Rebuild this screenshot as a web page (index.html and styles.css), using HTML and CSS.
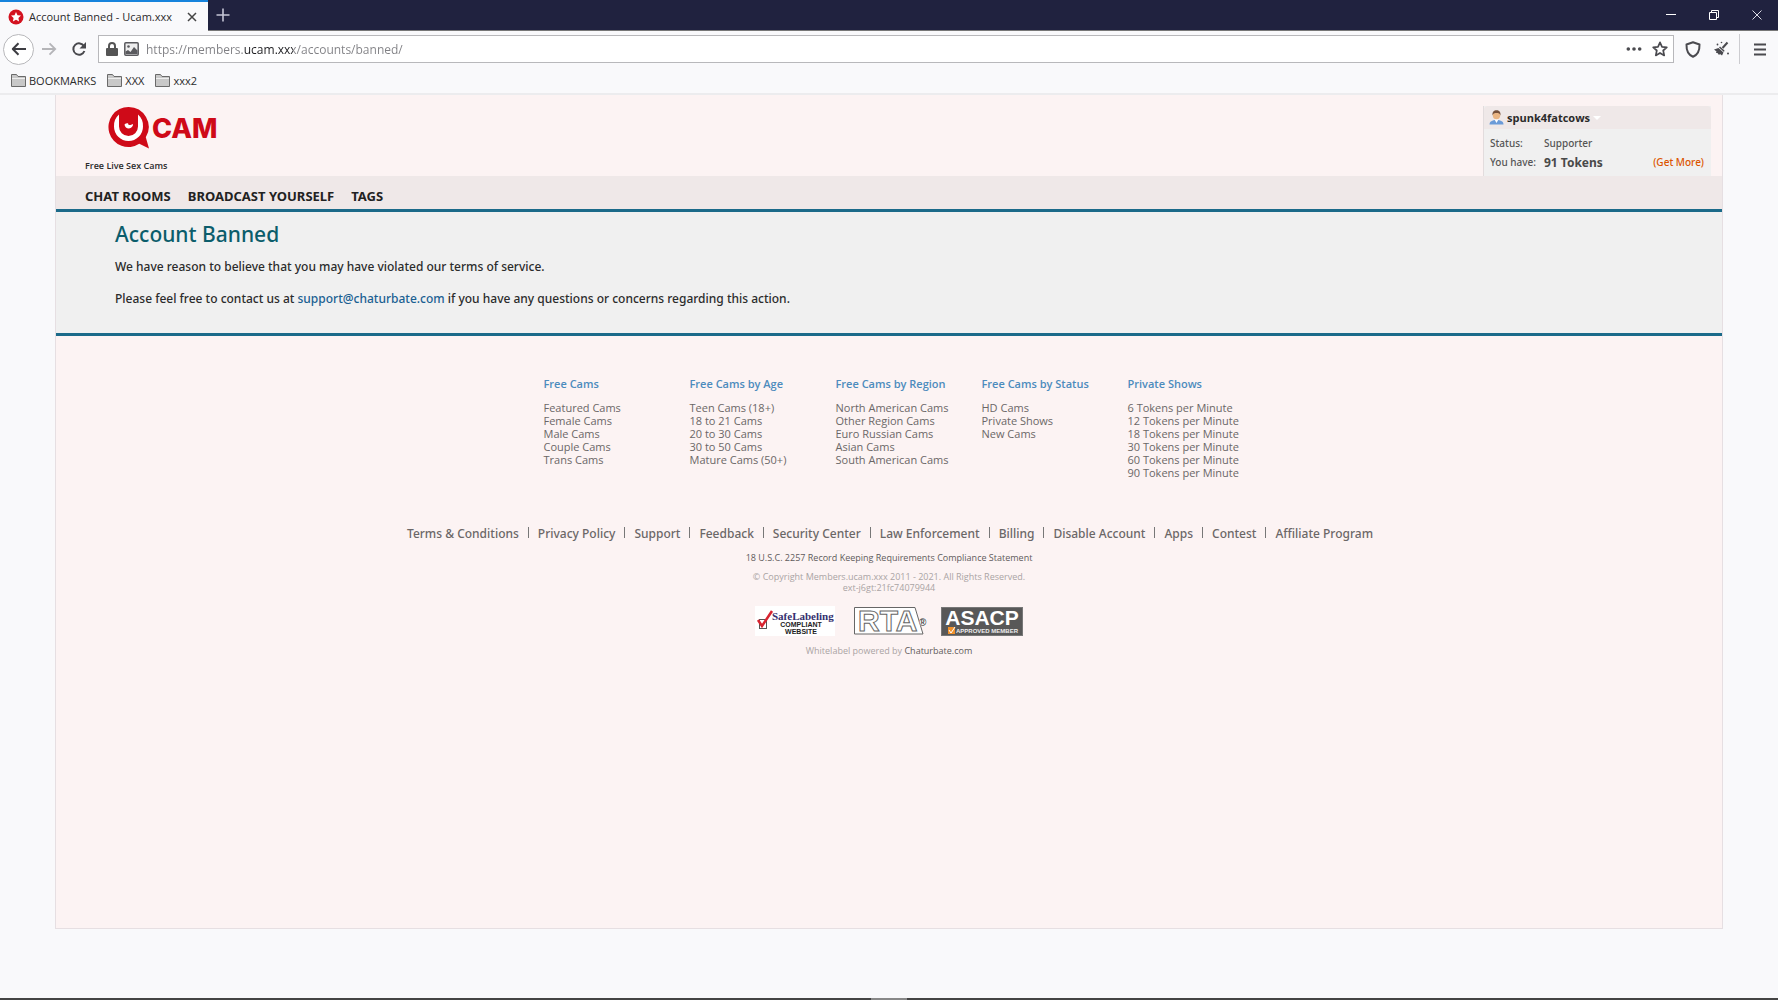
FILE: index.html
```html
<!DOCTYPE html>
<html lang="en">
<head>
<meta charset="utf-8">
<title>Account Banned - Ucam.xxx</title>
<link rel="stylesheet" href="styles.css">
</head>
<body>
<div class="window">
  <div class="titlebar">
    <div class="tab">
      <svg class="favicon" width="16" height="16" viewBox="0 0 16 16"><circle cx="8" cy="8" r="7.500" fill="#d3121f"/><path d="M8 3l1.500 3.200 3.500.4-2.600 2.400.7 3.500L8 10.800l-3.100 1.700.7-3.500L3 6.600l3.500-.4z" fill="#fff"/></svg>
      <span class="tab-title">Account Banned - Ucam.xxx</span>
      <button class="icon-btn" aria-label="Close tab"><svg width="10" height="10" viewBox="0 0 10 10"><path d="M1 1l8 8M9 1l-8 8" stroke="#444" stroke-width="1.500"/></svg></button>
    </div>
    <button class="icon-btn new-tab" aria-label="New tab"><svg width="14" height="14" viewBox="0 0 14 14"><path d="M7 0.500v13M0.500 7h13" stroke="#c5c6d6" stroke-width="1.600"/></svg></button>
    <div class="window-controls">
      <button class="icon-btn" aria-label="Minimize"><svg width="10" height="10" viewBox="0 0 10 10"><path d="M0 4.500h10" stroke="#fff"/></svg></button>
      <button class="icon-btn" aria-label="Restore"><svg width="10" height="10" viewBox="0 0 10 10" fill="none" stroke="#fff"><path d="M.5 2.500h7v7h-7zM2.500 2.500v-2h7v7h-2"/></svg></button>
      <button class="icon-btn" aria-label="Close"><svg width="10" height="10" viewBox="0 0 10 10"><path d="M.5.5l9 9M9.500.5l-9 9" stroke="#dcdce6"/></svg></button>
    </div>
  </div>
  <div class="toolbar">
    <button class="icon-btn back" aria-label="Back"><svg width="16" height="14" viewBox="0 0 16 14" fill="none" stroke="#3d3d42" stroke-width="2"><path d="M15 7H2M7.500 1.300L1.800 7l5.700 5.700" stroke-linejoin="round"/></svg></button>
    <button class="icon-btn forward" aria-label="Forward"><svg width="16" height="14" viewBox="0 0 16 14" fill="none" stroke="#b5b5b8" stroke-width="1.800"><path d="M1 7h13M8.500 1.300L14.200 7l-5.700 5.700"/></svg></button>
    <button class="icon-btn reload" aria-label="Reload"><svg width="16" height="16" viewBox="0 0 16 16"><path d="M13 5.200A5.700 5.700 0 1 0 13.400 10" fill="none" stroke="#48484c" stroke-width="2"/><path d="M15 1v6.500H8.500z" fill="#48484c"/></svg></button>
    <div class="address">
      <svg width="12" height="14" viewBox="0 0 12 14"><path d="M3 7V4a3 3 0 0 1 6 0v3" fill="none" stroke="#555" stroke-width="2"/><rect y="6" width="12" height="8" rx="1" fill="#555"/></svg>
      <svg width="15" height="14" viewBox="0 0 15 14"><rect x=".8" y=".8" width="13.400" height="12.400" rx="1" fill="#eee" stroke="#5a5a5e" stroke-width="1.500"/><circle cx="4.500" cy="4.500" r="1.300" fill="#5a5a5e"/><path d="M1.500 12V9.500L4 8l2.500 2L10 5l3.500 3.500V12z" fill="#5a5a5e"/></svg>
      <input class="url" type="text" aria-label="Address" value="https://members.ucam.xxx/accounts/banned/">
      <button class="icon-btn" aria-label="Page actions"><svg width="16" height="4" viewBox="0 0 16 4" fill="#4a4a4f"><circle cx="2.300" cy="2" r="1.800"/><circle cx="8" cy="2" r="1.800"/><circle cx="13.700" cy="2" r="1.800"/></svg></button>
      <button class="icon-btn" aria-label="Bookmark this page"><svg width="16" height="16" viewBox="0 0 16 16"><path d="M8 1.300l2 4.500 4.800.5-3.600 3.200 1 4.900L8 11.900l-4.200 2.500 1-4.900L1.200 6.300l4.800-.5z" fill="none" stroke="#4a4a4f" stroke-width="1.700" stroke-linejoin="round"/></svg></button>
    </div>
    <button class="icon-btn shield" aria-label="Protection"><svg width="16" height="17" viewBox="0 0 16 17"><path d="M8 1.200l6.500 2.300c.2 6-1.700 10.300-6.500 12.200C3.200 13.800 1.300 9.500 1.500 3.500z" fill="none" stroke="#4a4a4f" stroke-width="2" stroke-linejoin="round"/></svg></button>
    <button class="icon-btn broom" aria-label="Clean up"><svg width="16" height="16" viewBox="0 0 16 16" fill="#4a4a4f"><path d="M13.500 1.500L8.500 7" stroke="#4a4a4f" stroke-width="2"/><path d="M6 5.500l4.500 4-.5 1.500L5 6.500zM4.500 7l5 4.500L8 14.500 6 13l-1 1-1.500-2L2 12l.5-1.500L0 8.500z"/><circle cx="7.500" cy="1.500" r=".8"/><circle cx="3.500" cy="3.500" r=".9"/><circle cx="14" cy="12.500" r="1"/></svg></button>
    <button class="icon-btn menu" aria-label="Menu"><svg width="12" height="13" viewBox="0 0 12 13"><path d="M0 1.500h12M0 6.500h12M0 11.500h12" stroke="#4a4a4f" stroke-width="1.800"/></svg></button>
  </div>
  <div class="bookmarks">
    <button><svg width="15" height="13" viewBox="0 0 15 13"><path d="M.5 12.500V.5h5l1.500 2h7.500v10z" fill="#c8c8c8" stroke="#6a6a6a"/><path d="M1 4.500h13" stroke="#eee"/></svg>BOOKMARKS</button>
    <button><svg width="15" height="13" viewBox="0 0 15 13"><path d="M.5 12.500V.5h5l1.500 2h7.500v10z" fill="#c8c8c8" stroke="#6a6a6a"/><path d="M1 4.500h13" stroke="#eee"/></svg>XXX</button>
    <button><svg width="15" height="13" viewBox="0 0 15 13"><path d="M.5 12.500V.5h5l1.500 2h7.500v10z" fill="#c8c8c8" stroke="#6a6a6a"/><path d="M1 4.500h13" stroke="#eee"/></svg>xxx2</button>
  </div>
  <div class="page">
    <header class="site-header">
      <div class="brand">
        <a class="logo" href="#" aria-label="UCAM"><svg width="110" height="44" viewBox="0 0 110 44">
          <path d="M20.500 1a20 20 0 1 0 10.800 36.800L41 42.500l-3.200-11.200A20 20 0 0 0 20.500 1z" fill="#cf0a18"/>
          <path d="M11 8.500v12a9.500 9.500 0 0 0 19 0v-12a15 15 0 0 1 5 12 14.500 14.500 0 0 1-29 0 15 15 0 0 1 5-12z" fill="#fff"/>
          <path d="M14 6v13a6.500 6.500 0 0 0 13 0V6z" fill="#cf0a18"/>
          <path d="M16.500 18.500a4.200 4.200 0 0 0 8.500-.5l-2.500 1a2 2 0 0 1-2.500-1.800 4 4 0 0 0-3.500 1.300z" fill="#fff"/>
          <text x="44" y="32" class="logo-text">CAM</text></svg></a>
        <p class="tagline">Free Live Sex Cams</p>
      </div>
      <section class="user">
        <h2 class="user-name"><svg width="15" height="15" viewBox="0 0 15 15"><path d="M.5 14.500c0-3 2.500-4.500 7-4.500s7 1.500 7 4.500z" fill="#6b9bd8"/><path d="M5.500 9.500h4L7.500 13z" fill="#fff"/><circle cx="7.500" cy="5.500" r="3.700" fill="#eab583"/><path d="M3.500 5.500C3 2 5 .3 7.500.3S12 2 11.500 5.500C11 3.500 9.500 3 7.500 3s-3.500.5-4 2.500z" fill="#75503a"/></svg>spunk4fatcows<span class="caret"></span></h2>
        <dl class="user-info">
          <dt>Status:</dt><dd>Supporter</dd><dd></dd>
          <dt>You have:</dt><dd class="tokens">91 Tokens</dd><dd><a href="#">(Get More)</a></dd>
        </dl>
      </section>
    </header>
    <nav class="site-nav">
      <a href="#">CHAT ROOMS</a><a href="#">BROADCAST YOURSELF</a><a href="#">TAGS</a>
    </nav>
    <main class="notice">
      <h1>Account Banned</h1>
      <p>We have reason to believe that you may have violated our terms of service.</p>
      <p>Please feel free to contact us at <a href="#">support@chaturbate.com</a> if you have any questions or concerns regarding this action.</p>
    </main>
    <footer class="site-footer">
      <div class="columns">
        <div><h3>Free Cams</h3><ul><li><a href="#">Featured Cams</a></li><li><a href="#">Female Cams</a></li><li><a href="#">Male Cams</a></li><li><a href="#">Couple Cams</a></li><li><a href="#">Trans Cams</a></li></ul></div>
        <div><h3>Free Cams by Age</h3><ul><li><a href="#">Teen Cams (18+)</a></li><li><a href="#">18 to 21 Cams</a></li><li><a href="#">20 to 30 Cams</a></li><li><a href="#">30 to 50 Cams</a></li><li><a href="#">Mature Cams (50+)</a></li></ul></div>
        <div><h3>Free Cams by Region</h3><ul><li><a href="#">North American Cams</a></li><li><a href="#">Other Region Cams</a></li><li><a href="#">Euro Russian Cams</a></li><li><a href="#">Asian Cams</a></li><li><a href="#">South American Cams</a></li></ul></div>
        <div><h3>Free Cams by Status</h3><ul><li><a href="#">HD Cams</a></li><li><a href="#">Private Shows</a></li><li><a href="#">New Cams</a></li></ul></div>
        <div><h3>Private Shows</h3><ul><li><a href="#">6 Tokens per Minute</a></li><li><a href="#">12 Tokens per Minute</a></li><li><a href="#">18 Tokens per Minute</a></li><li><a href="#">30 Tokens per Minute</a></li><li><a href="#">60 Tokens per Minute</a></li><li><a href="#">90 Tokens per Minute</a></li></ul></div>
      </div>
      <ul class="links">
        <li><a href="#">Terms &amp; Conditions</a></li><li><a href="#">Privacy Policy</a></li><li><a href="#">Support</a></li><li><a href="#">Feedback</a></li><li><a href="#">Security Center</a></li><li><a href="#">Law Enforcement</a></li><li><a href="#">Billing</a></li><li><a href="#">Disable Account</a></li><li><a href="#">Apps</a></li><li><a href="#">Contest</a></li><li><a href="#">Affiliate Program</a></li>
      </ul>
      <p class="compliance"><a href="#">18 U.S.C. 2257 Record Keeping Requirements Compliance Statement</a></p>
      <p class="copyright">© Copyright Members.ucam.xxx 2011 - 2021. All Rights Reserved.<br>ext-j6gt:21fc74079944</p>
      <div class="badges">
        <a href="#"><svg width="80" height="30" viewBox="0 0 80 30"><rect width="80" height="30" fill="#fff"/><rect x="4.500" y="13.500" width="7" height="9" fill="none" stroke="#555"/><path d="M3 14l4 6L17 5" fill="none" stroke="#d8232f" stroke-width="2.500"/><text x="17" y="14" class="safe">SafeLabeling</text><text x="46" y="21" class="safe-sub">COMPLIANT</text><text x="46" y="28" class="safe-sub">WEBSITE</text></svg></a>
        <a href="#"><svg width="80" height="30" viewBox="-5 0 80 30"><path d="M1.500 1.500H62L70 28H1.500z" fill="#fff" stroke="#666"/><text x="5" y="25" class="rta">RTA</text><circle cx="70" cy="16" r="4" fill="#fff"/><text x="66" y="20" class="reg">®</text></svg></a>
        <a href="#"><svg width="82" height="29" viewBox="0 0 82 29"><rect x=".5" y=".5" width="81" height="28" fill="#585858" stroke="#777"/><text x="41" y="18" class="asacp">ASACP</text><rect x="7" y="20" width="7" height="7" fill="#f0912b"/><path d="M8 23l2 3 4-6" fill="none" stroke="#fff"/><text x="46" y="26" class="asacp-sub">APPROVED MEMBER</text></svg></a>
      </div>
      <p class="powered">Whitelabel powered by <a href="#">Chaturbate.com</a></p>
    </footer>
  </div>
  <div class="taskbar-edge"></div>
</div>
</body>
</html>
```
FILE: styles.css
```css
* { box-sizing: border-box; }
body {
  margin: 0;
  background: #f9f9fb;
  color: #2b2b2b;
  font-family: "Open Sans", "Noto Sans", sans-serif;
  font-size: 12px;
}
h1, h2, h3, p, ul, dl, dd { margin: 0; padding: 0; }
ul { list-style: none; }
a { color: inherit; text-decoration: none; }
svg { display: block; flex: none; }
button {
  margin: 0;
  padding: 0;
  border: 0;
  background: none;
  font: inherit;
  color: inherit;
}
.icon-btn { display: flex; align-items: center; justify-content: center; }
.window { display: flex; flex-direction: column; min-height: 100vh; }

/* Browser frame */
.titlebar { display: flex; height: 31px; background: #20223f; border-bottom: 1px solid #777; }
.tab {
  display: flex;
  align-items: center;
  width: 208px;
  height: 31px;
  padding: 0 11px 0 8px;
  border-top: 2px solid #1683dc;
  background: #f9f9fb;
  font-size: 11px;
}
.tab-title { flex: 1; padding-left: 5px; white-space: nowrap; }
.new-tab { width: 30px; }
.window-controls { display: flex; gap: 33px; margin-left: auto; padding-right: 16px; }
.toolbar { display: flex; align-items: center; height: 36px; padding: 0 12px 0 3px; }
.back { width: 31px; height: 31px; border: 1px solid #b8b8bb; border-radius: 50%; background: #fff; }
.forward { width: 30px; }
.reload { width: 30px; }
.address {
  display: flex;
  flex: 1;
  align-items: center;
  gap: 6px;
  height: 28px;
  margin-left: 4px;
  padding: 0 5px 0 7px;
  border: 1px solid #b8b8bb;
  background: #fff;
}
.address .icon-btn { margin-left: 4px; }
.url {
  flex: 1;
  margin-left: 1px;
  padding: 2px 0 0;
  border: 0;
  outline: 0;
  color: transparent;
  background: linear-gradient(90deg, #808084 97px, #1c1c1f 97px 147px, #808084 147px);
  -webkit-background-clip: text;
  background-clip: text;
  font: 12px/20px "Open Sans", sans-serif;
}
.shield { width: 16px; margin-left: 11px; }
.broom { width: 16px; margin-left: 13px; }
.menu { width: 27px; height: 30px; margin-left: 9px; padding-left: 14px; border-left: 1px solid #ccccd0; }
.bookmarks {
  display: flex;
  gap: 11px;
  height: 28px;
  padding: 0 11px;
  border-bottom: 2px solid #ececee;
  font-size: 11px;
}
.bookmarks button { display: flex; align-items: center; gap: 3px; }

/* Site */
.page {
  display: flex;
  flex-direction: column;
  flex: 1;
  margin: 0 55px 69px;
  border: 1px solid #e6dfe2;
  border-top: 0;
  background: #fcf3f3;
}
.site-header { display: flex; justify-content: space-between; padding: 11px 11px 0 29px; height: 81px; }
.logo { display: block; width: 110px; margin-left: 23px; }
.logo-text { font: 800 27px Inter, sans-serif; fill: #cf0a18; }
.tagline { margin-top: 9px; font-size: 9px; line-height: 14px; font-weight: 600; }
.user { width: 228px; border-left: 1px solid #e2dcdd; background: #f0f0f0; color: #555; }
.user-name {
  display: flex;
  align-items: center;
  gap: 3px;
  height: 23px;
  padding-left: 5px;
  border-radius: 4px 4px 0 0;
  background: #efe8e8;
  color: #2b2b2b;
  font-size: 11px;
}
.caret { border: 4px solid transparent; border-top-color: #fff; border-bottom: 0; }
.user-info {
  display: grid;
  grid-template-columns: 54px 1fr auto;
  padding: 5px 7px 0 6px;
  font: 500 10px/19px "Noto Sans", sans-serif;
}
.user-info a { color: #dc5500; }
.tokens { font-size: 12px; font-weight: 700; color: #494949; }
.site-nav {
  display: flex;
  align-items: center;
  gap: 17px;
  height: 36px;
  padding: 6px 29px 0;
  border-bottom: 3px solid #1b6a89;
  background: #efe8e8;
  font: 700 13px "Noto Sans", sans-serif;
  color: #222;
}
.notice {
  height: 124px;
  padding: 8px 59px 0;
  border-bottom: 3px solid #1b6a89;
  background: #f0f0f0;
  font: 500 12px/16px "Noto Sans", sans-serif;
}
.notice h1 { font-size: 21px; font-weight: 500; line-height: 28px; color: #0b5d6b; }
.notice p { margin-top: 11px; }
.notice p + p { margin-top: 16px; }
.notice a { color: #1a6092; }
.site-footer { display: flex; flex-direction: column; align-items: center; padding-top: 40px; color: #6b6767; }
.columns { display: grid; grid-template-columns: repeat(5, 146px); padding-left: 39px; font-size: 11px; line-height: 13px; white-space: nowrap; }
.columns h3 { margin-bottom: 9px; color: #4c8bbd; font-size: 11px; line-height: 16px; font-weight: 600; }
.links { display: flex; margin-top: 47px; padding-left: 2px; font: 500 12px/16px "Noto Sans", sans-serif; }
.links li { display: flex; }
.links li + li::before { content: ""; width: 1px; height: 11px; margin: 1px 9px; background: #777; }
.compliance { margin-top: 10px; font-size: 9px; line-height: 12px; color: #5f5b5b; }
.copyright { margin-top: 7px; color: #aaa4a4; font-size: 9px; line-height: 11px; text-align: center; }
.badges { display: flex; gap: 13px; margin-top: 13px; align-items: center; }
.badges svg { overflow: visible; }
.safe { font: 700 11px "Liberation Serif", serif; fill: #35306f; }
.safe-sub { font: 700 7px "Liberation Sans", sans-serif; fill: #222; text-anchor: middle; }
.rta { font: 700 30px "Liberation Sans", sans-serif; fill: #fff; stroke: #666; stroke-width: 1px; }
.reg { font: 700 10px "Liberation Sans", sans-serif; fill: #444; }
.asacp { font: 700 21px "Liberation Sans", sans-serif; fill: #fff; text-anchor: middle; }
.asacp-sub { font: 700 6px "Liberation Sans", sans-serif; fill: #eee; text-anchor: middle; }
.powered { margin-top: 9px; color: #aaa4a4; font-size: 9px; line-height: 12px; }
.powered a { color: #5f5b5b; }
.taskbar-edge { height: 2px; background: linear-gradient(90deg, #444 49%, #888 49% 51%, #444 51%); }
```
